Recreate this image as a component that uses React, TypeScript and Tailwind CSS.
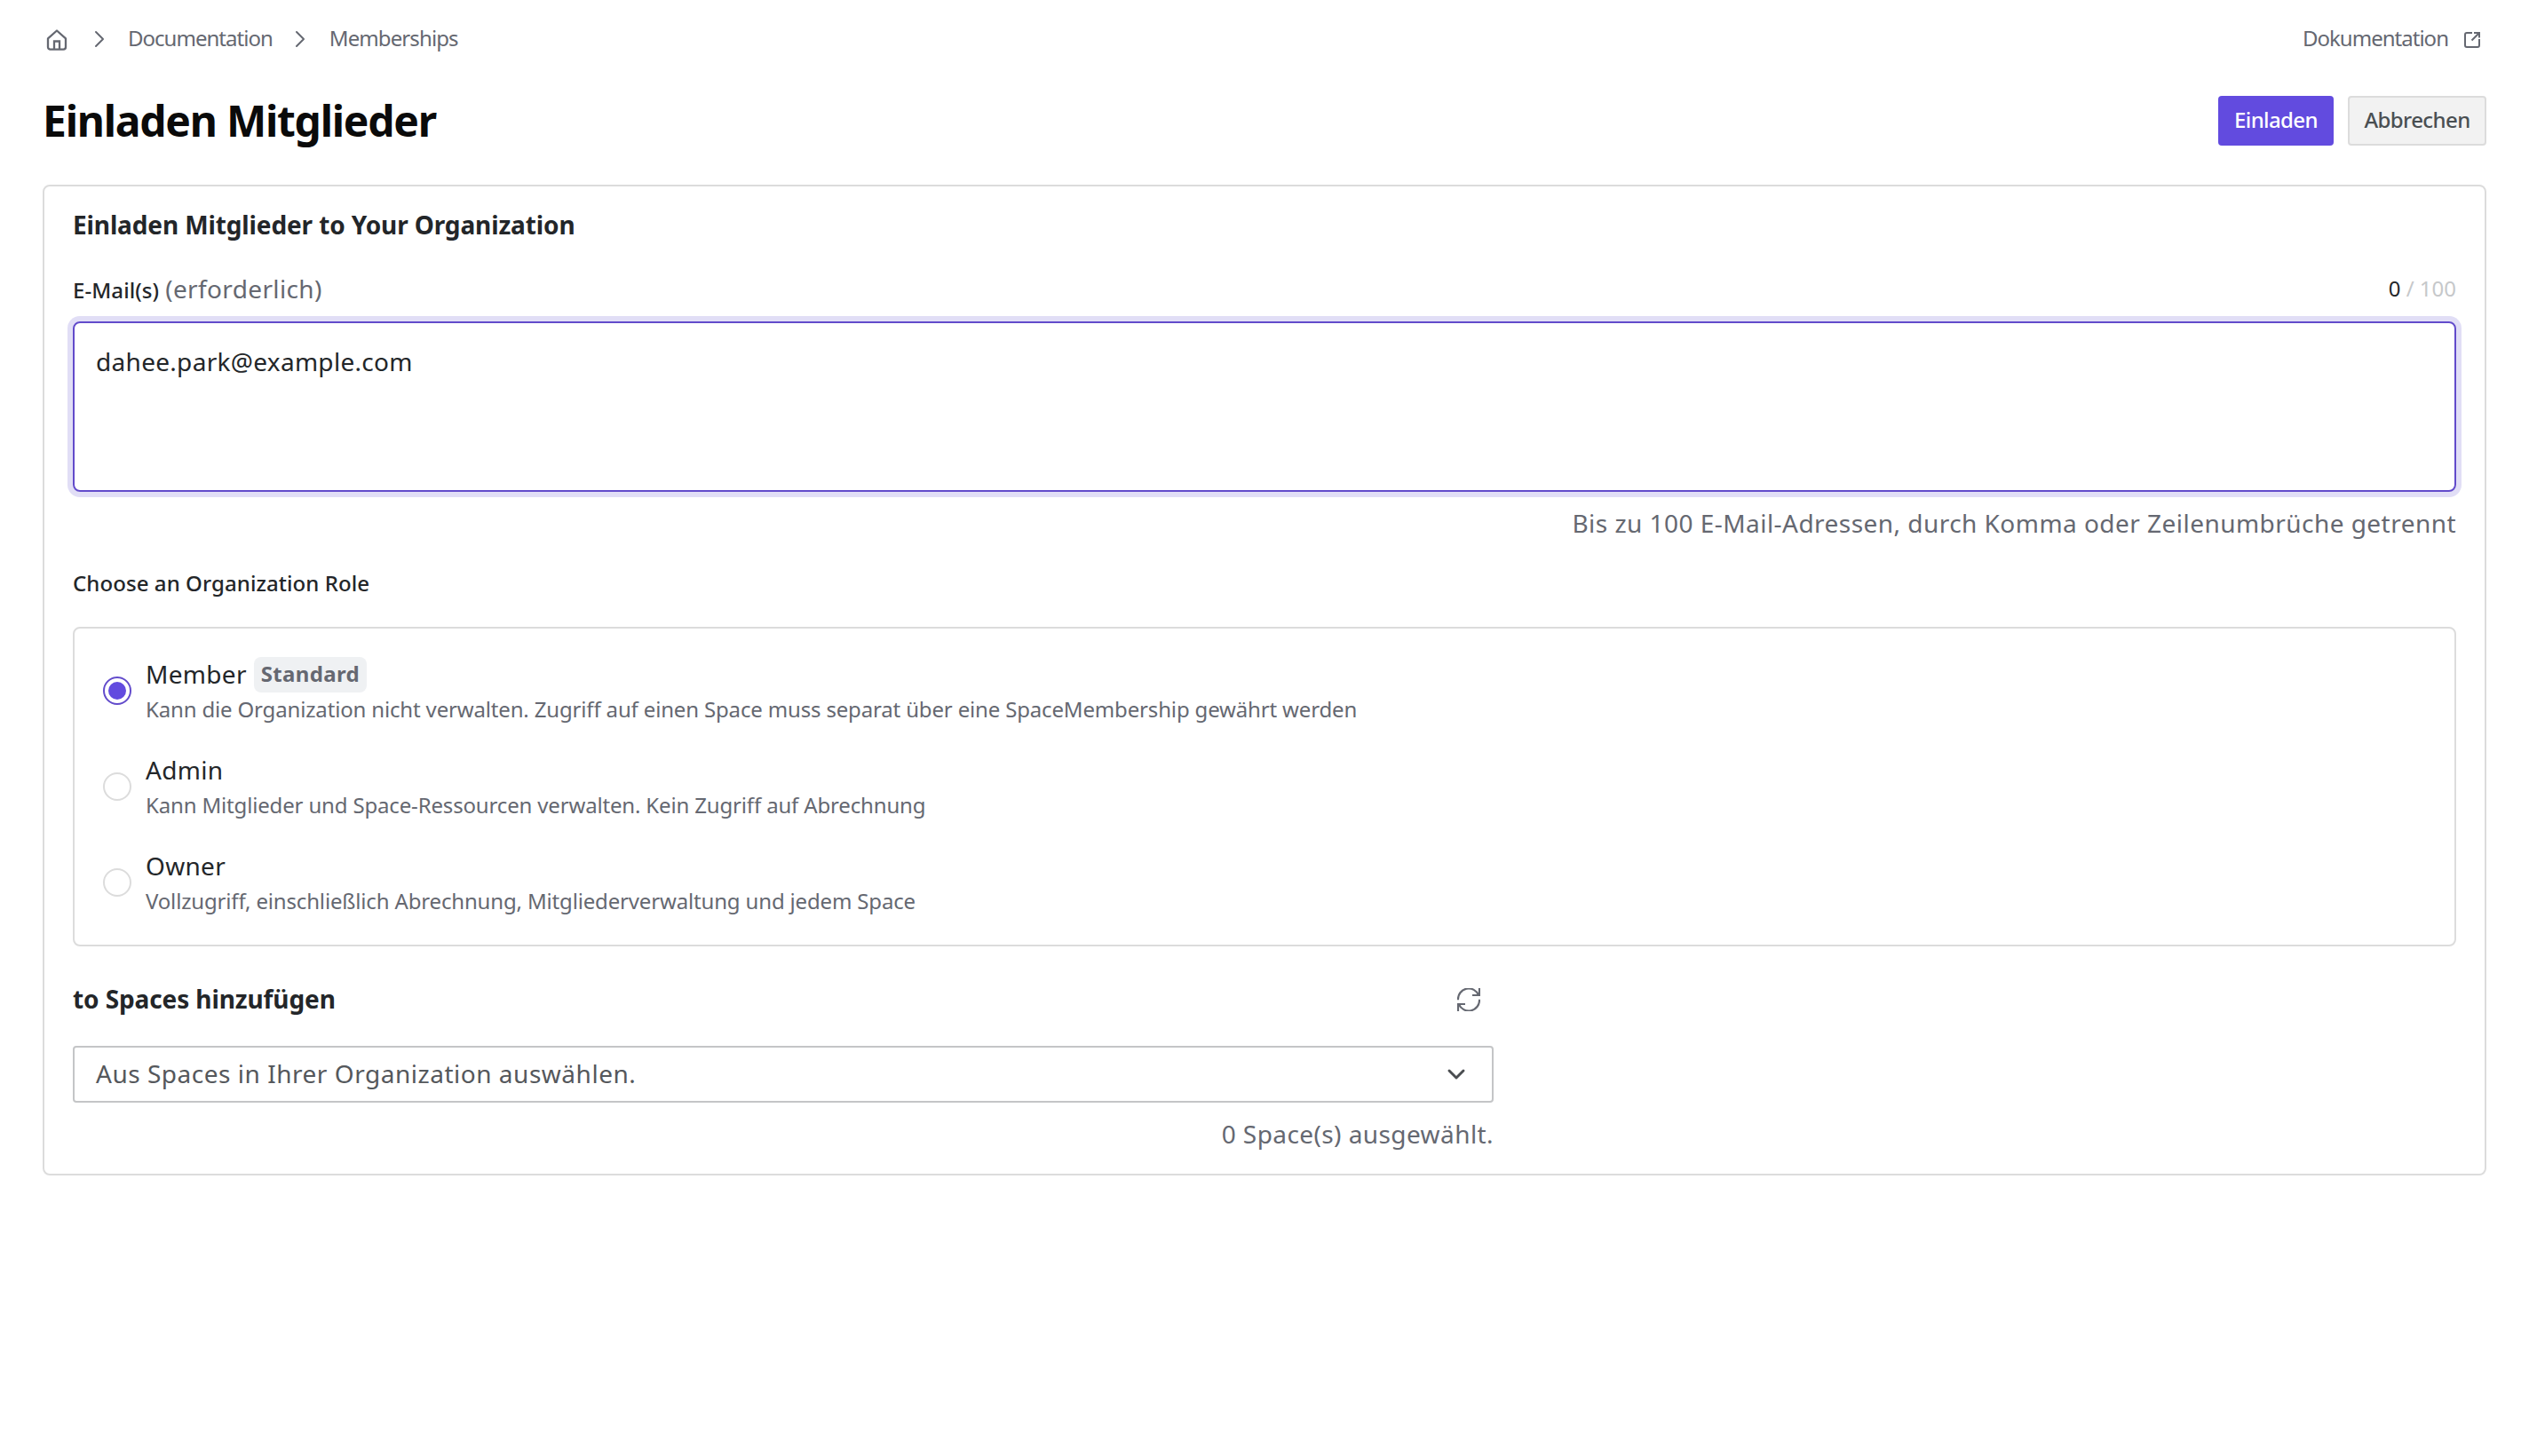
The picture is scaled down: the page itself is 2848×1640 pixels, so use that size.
import React, { useState } from 'react';
import { ChevronDown } from 'lucide-react';

interface Role {
  id: string;
  name: string;
  description: string;
  isDefault?: boolean;
}

const roles: Role[] = [
  {
    id: 'member',
    name: 'Member',
    description: 'Kann die Organization nicht verwalten. Zugriff auf einen Space muss separat über eine SpaceMembership gewährt werden',
    isDefault: true
  },
  {
    id: 'admin',
    name: 'Admin',
    description: 'Kann Mitglieder und Space-Ressourcen verwalten. Kein Zugriff auf Abrechnung'
  },
  {
    id: 'owner',
    name: 'Owner',
    description: 'Vollzugriff, einschließlich Abrechnung, Mitgliederverwaltung und jedem Space'
  }
];

const HomeIcon = () => (
  <svg viewBox="0 0 24 24" className="mt-0.5 ml-1 h-6 w-6" fill="none" stroke="currentColor" strokeWidth="2.3" strokeLinejoin="round">
    <path d="M2 10.3 12 1.5l10 8.8V20a2.6 2.6 0 0 1-2.6 2.6H4.6A2.6 2.6 0 0 1 2 20z" />
    <path d="M9 22.5V13.5h6v9" strokeLinejoin="miter" />
  </svg>
);

const SeparatorIcon = ({ className }: { className: string }) => (
  <svg viewBox="0 0 12 20" className={className} fill="none" stroke="currentColor" strokeWidth="2" strokeLinecap="round" strokeLinejoin="round">
    <path d="m2 2 8 8-8 8" />
  </svg>
);

const ExternalIcon = () => (
  <svg viewBox="0 0 18 18" className="mt-0.5 h-[18px] w-[18px]" fill="none" stroke="currentColor" strokeWidth="2">
    <path d="M9 1H3a2 2 0 0 0-2 2v12a2 2 0 0 0 2 2h12a2 2 0 0 0 2-2V8" />
    <path d="M11 1h6v5.5M17 1 8.5 9.5" />
  </svg>
);

const RefreshIcon = () => (
  <svg viewBox="0 0 26 26" className="h-[26px] w-[26px]" fill="none" stroke="currentColor" strokeWidth="2.2">
    <path d="M1 13.3A12 12 0 0 1 24.2 8.2M25 0v8h-8" />
    <path d="M25 12.7A12 12 0 0 1 1.8 17.8M1 26v-8h8" />
  </svg>
);

export default function InviteMembers() {
  const [emails, setEmails] = useState('dahee.park@example.com');
  const [selectedRole, setSelectedRole] = useState('member');

  return (
    <div className="min-h-[1640px] bg-white px-12 pt-6 font-['Noto_Sans',sans-serif] text-[28px] text-[#232629]">
      {/* Breadcrumb */}
      <div className="flex h-10 items-center justify-between text-[24px] tracking-[-0.98px] text-[#656871]">
        <nav className="flex items-center">
          <HomeIcon />
          <SeparatorIcon className="ml-[30px] h-5 w-3" />
          <a className="ml-[26px] pb-0.5">Documentation</a>
          <SeparatorIcon className="ml-[25px] h-5 w-3" />
          <a className="ml-[27px] pb-0.5 tracking-[-0.9px]">Memberships</a>
        </nav>
        <a className="flex items-center gap-[18px] pr-[7px]">
          <span className="pb-0.5">Dokumentation</span>
          <ExternalIcon />
        </a>
      </div>

      {/* Page title */}
      <div className="mt-11 flex h-14 items-center justify-between">
        <h1 className="text-[48px] font-bold tracking-[-1.25px] text-[#0a0a0a]">Einladen Mitglieder</h1>
        <div className="flex gap-4 text-[24px] font-medium tracking-[-0.6px]">
          <button className="h-14 w-[130px] rounded bg-[#624bdf] pb-0.5 text-white">Einladen</button>
          <button className="h-14 w-[156px] rounded border-2 border-[#dcdcdc] bg-[#f2f2f2] pb-0.5 text-[#4a4f52]">Abbrechen</button>
        </div>
      </div>

      <section className="mt-11 h-[1116px] rounded-lg border-2 border-[#dcdcdc] px-8 pt-[21px]">
        <h2 className="h-11 leading-[44px] font-bold tracking-[-0.12px]">Einladen Mitglieder to Your Organization</h2>

        {/* Email field */}
        <div className="mt-7 flex h-11 items-center justify-between">
          <label className="flex items-baseline gap-[7px]">
            <span className="text-[24px] font-medium tracking-[0.08px]">E-Mail(s)</span>
            <span className="tracking-[0.36px] text-[#656871]">(erforderlich)</span>
          </label>
          <span className="text-[24px] text-[#c6c8ca]">
            <span className="text-[#232629]">0</span> / 100
          </span>
        </div>
        <textarea
          value={emails}
          onChange={(e) => setEmails(e.target.value)}
          className="mt-[15px] block h-48 w-full resize-none rounded-lg border-2 border-[#624bcb] px-6 pt-[22px] leading-[42px] tracking-[0.3px] ring-6 ring-[#e1def6] outline-none"
        />
        <p className="mt-[13px] h-11 text-right leading-[44px] tracking-[0.46px] text-[#656871]">
          Bis zu 100 E-Mail-Adressen, durch Komma oder Zeilenumbrüche getrennt
        </p>

        {/* Role selection */}
        <h3 className="mt-[26px] h-10 text-[24px] leading-[40px] font-medium tracking-[0.08px]">Choose an Organization Role</h3>
        <div className="mt-[29px] flex h-[360px] flex-col gap-7 rounded-lg border-2 border-[#dcdcdc] px-8 pt-[30px]">
          {roles.map((role) => (
            <div key={role.id} className="flex h-20 items-center gap-4" onClick={() => setSelectedRole(role.id)}>
              <span
                className={`flex h-8 w-8 items-center justify-center rounded-full border-2 ${
                  selectedRole === role.id ? 'border-[#624bcb]' : 'border-[#dcdcdc]'
                }`}
              >
                {selectedRole === role.id && <span className="h-5 w-5 rounded-full bg-[#624bdf]" />}
              </span>
              <div className="pt-0.5">
                <div className="flex h-10 items-center gap-2">
                  <span className="tracking-[0.3px]">{role.name}</span>
                  {role.isDefault && (
                    <span className="mt-0.5 h-10 rounded-lg bg-[#eff1f3] px-2 text-[24px] leading-[37px] font-bold tracking-[0.35px] text-[#656871]">
                      Standard
                    </span>
                  )}
                </div>
                <p className="h-10 text-[24px] leading-[40px] tracking-[-0.16px] text-[#656871]">{role.description}</p>
              </div>
            </div>
          ))}
        </div>

        {/* Spaces */}
        <div className="w-[1600px]">
          <div className="mt-[38px] flex h-11 items-center justify-between pr-[15px]">
            <h3 className="pb-0.5 font-bold tracking-[-0.1px]">to Spaces hinzufügen</h3>
            <button className="text-[#656871]"><RefreshIcon /></button>
          </div>
          <button className="mt-[30px] flex h-16 w-full items-center justify-between rounded border-2 border-[#c4c5c7] px-6 text-[#55585c]">
            <span className="pb-0.5 tracking-[0.52px]">Aus Spaces in Ihrer Organization auswählen.</span>
            <ChevronDown className="h-8 w-8 text-[#4a4d50]" strokeWidth={2.2} />
          </button>
          <p className="mt-[13px] h-11 text-right leading-[44px] tracking-[0.42px] text-[#656871]">0 Space(s) ausgewählt.</p>
        </div>
      </section>
    </div>
  );
}
